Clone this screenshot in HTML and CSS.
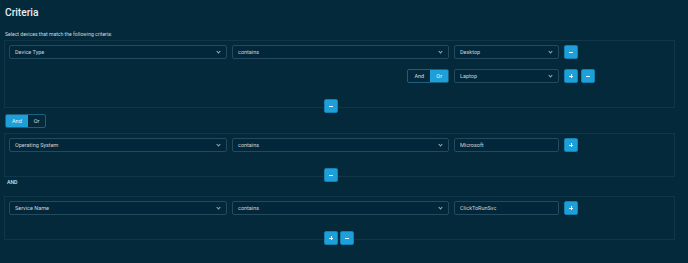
FILE: index.html
```html
<!DOCTYPE html>
<html lang="en">
<head>
    <meta charset="UTF-8">
    <title>Criteria</title>
    <link rel="stylesheet" href="styles.css">
</head>
<body>
    <div class="criteria-page">
        <h1 class="page-title">Criteria</h1>
        <p class="page-hint">Select devices that match the following criteria:</p>

        <div class="group">
            <div class="rule-grid">
                <div class="field select">Device Type<span class="chev"></span></div>
                <div class="field select">contains<span class="chev"></span></div>
                <div class="field select">Desktop<span class="chev"></span></div>
                <div class="btns"><button class="icon-btn minus"></button></div>

                <div></div>
                <div class="toggle-cell">
                    <div class="toggle">
                        <span class="seg">And</span><span class="seg on">Or</span>
                    </div>
                </div>
                <div class="field select">Laptop<span class="chev"></span></div>
                <div class="btns"><button class="icon-btn plus"></button><button class="icon-btn minus"></button></div>
            </div>
            <div class="group-foot">
                <button class="icon-btn minus"></button>
            </div>
        </div>

        <div class="toggle join">
            <span class="seg on">And</span><span class="seg">Or</span>
        </div>

        <div class="group">
            <div class="rule-grid">
                <div class="field select">Operating System<span class="chev"></span></div>
                <div class="field select">contains<span class="chev"></span></div>
                <div class="field">Microsoft</div>
                <div class="btns"><button class="icon-btn plus"></button></div>
            </div>
            <div class="group-foot">
                <button class="icon-btn minus"></button>
            </div>
        </div>

        <div class="join-label">AND</div>

        <div class="group">
            <div class="rule-grid">
                <div class="field select">Service Name<span class="chev"></span></div>
                <div class="field select">contains<span class="chev"></span></div>
                <div class="field">ClickToRunSvc</div>
                <div class="btns"><button class="icon-btn plus"></button></div>
            </div>
            <div class="group-foot">
                <button class="icon-btn plus"></button><button class="icon-btn minus"></button>
            </div>
        </div>
    </div>
</body>
</html>
```

FILE: styles.css
```css
body {
    margin: 0;
    padding: 0;
    background-color: #03293a;
    font-family: Roboto, "Liberation Sans", Arial, sans-serif;
    color: #d4dde2;
}
.criteria-page {
    padding: 0 13px 0 4px;
    height: 263px;
    box-sizing: border-box;
    overflow: hidden;
}
.page-title {
    margin: 0;
    padding: 7px 0 0 1px;
    font-size: 10.2px;
    line-height: 12px;
    font-weight: 500;
    color: #e8eef1;
}
.page-hint {
    margin: 12px 0 0 1px;
    font-size: 5.1px;
    line-height: 7px;
    color: #d0d9de;
}
.group {
    margin-top: 2px;
    border: 1px solid #0f3749;
    padding: 4px 4px 0;
}
.rule-grid {
    display: grid;
    grid-template-columns: 218px 217px 105px auto;
    column-gap: 5px;
    row-gap: 10px;
}
.field {
    position: relative;
    height: 14px;
    box-sizing: border-box;
    border: 1px solid #234b5d;
    border-radius: 2px;
    background-color: #02273a;
    padding: 0 5px;
    font-size: 5.5px;
    line-height: 12px;
    color: #c9d3d8;
}
.chev {
    position: absolute;
    right: 6px;
    top: 4px;
    width: 2px;
    height: 2px;
    border-right: 0.7px solid #9fb0b8;
    border-bottom: 0.7px solid #9fb0b8;
    transform: rotate(45deg);
}
.btns {
    display: flex;
    gap: 3px;
    align-items: center;
}
.icon-btn {
    position: relative;
    width: 14px;
    height: 14px;
    padding: 0;
    border: 1px solid #1580b3;
    border-radius: 2px;
    background-color: #1d9fd9;
    cursor: pointer;
}
.icon-btn::before {
    content: "";
    position: absolute;
    left: 4px;
    top: 5.5px;
    width: 4px;
    height: 1px;
    background: #eef7fb;
}
.icon-btn.plus::after {
    content: "";
    position: absolute;
    left: 5.5px;
    top: 4px;
    width: 1px;
    height: 4px;
    background: #eef7fb;
}
.toggle-cell {
    display: flex;
    justify-content: flex-end;
}
.toggle {
    display: inline-flex;
    height: 14px;
    box-sizing: border-box;
    border: 1px solid #1c5f7e;
    border-radius: 2px;
    overflow: hidden;
}
.seg {
    font-size: 5.5px;
    line-height: 12px;
    padding: 0 6px;
    color: #d6dfe3;
}
.seg:first-child {
    width: 22px;
    box-sizing: border-box;
    text-align: center;
}
.seg.on {
    background-color: #1d9fd9;
    color: #eef7fb;
}
.toggle.join {
    display: flex;
    width: 41px;
    margin: 6px 0 0 1px;
}
.toggle.join + .group {
    margin-top: 5px;
}
.group-foot {
    display: flex;
    gap: 2px;
    margin-top: 16px;
    margin-bottom: -6px;
    padding-left: 315px;
}
.join-label {
    margin: 2px 0 0 3px;
    font-size: 5.2px;
    line-height: 7px;
    font-weight: 500;
    color: #d8e0e4;
}
.join-label + .group {
    margin-top: 10px;
}
```
